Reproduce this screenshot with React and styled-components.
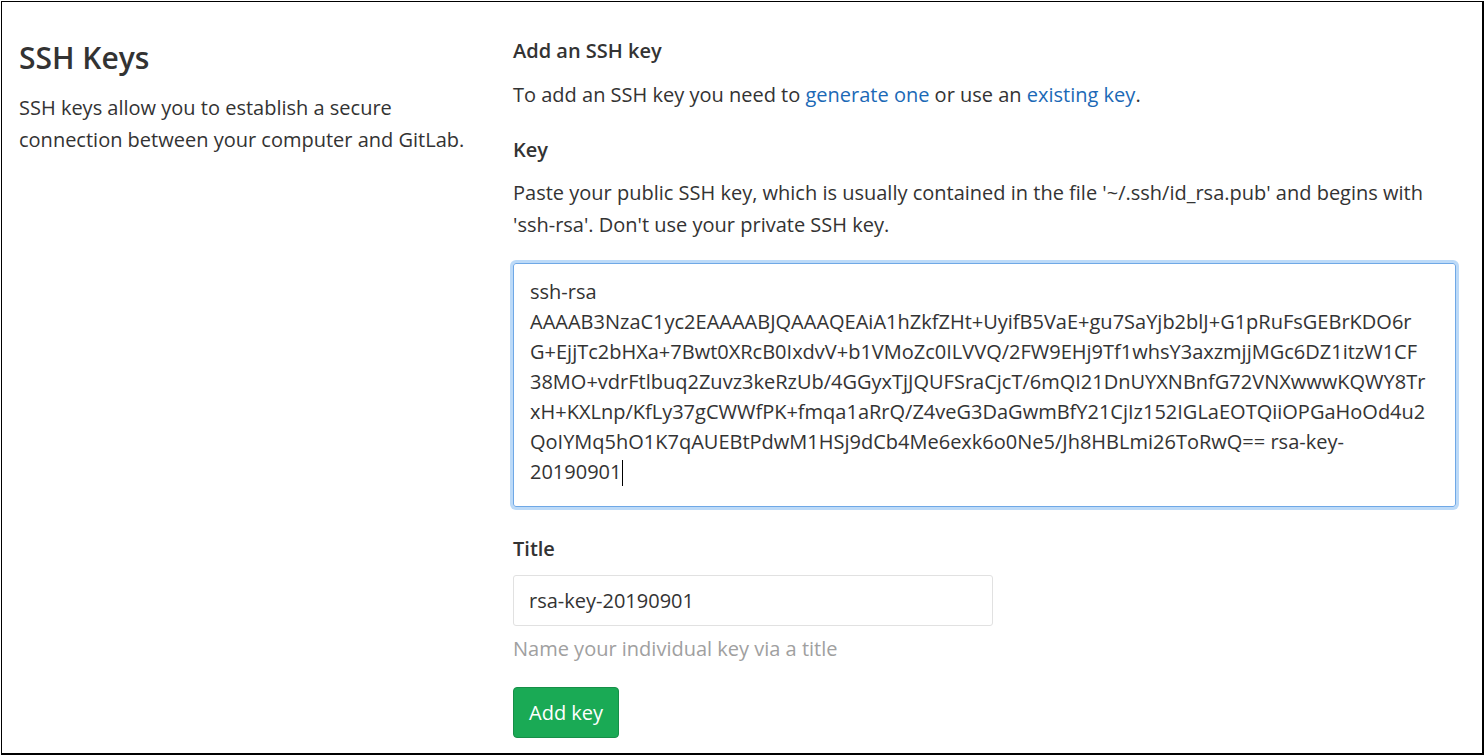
import React from 'react';
import styled, { createGlobalStyle } from 'styled-components';

const GlobalStyle = createGlobalStyle`
  html, body {
    margin: 0;
    padding: 0;
    background: #fff;
  }

  body {
    font-family: 'Open Sans', 'Noto Sans', sans-serif;
    color: #2e2e2e;
  }
`;

const Frame = styled.div`
  box-sizing: border-box;
  width: 1483px;
  height: 754px;
  margin: 1px 0 0 1px;
  border-style: solid;
  border-color: #000;
  border-width: 1px 2px 2px 1px;
  overflow: hidden;
  background: #fff;
`;

const Row = styled.div`
  display: grid;
  grid-template-columns: 472px 943px;
  gap: 22px;
  padding-left: 17px;
`;

const Aside = styled.div`
  padding-top: 37px;
`;

const PageTitle = styled.h4`
  margin: 0;
  font-size: 30px;
  line-height: 38px;
  font-weight: 600;
  color: #333;
`;

const Text = styled.p`
  margin: ${({ $top }) => $top || 0}px 0 0;
  font-size: 20px;
  line-height: 32px;
  color: ${({ $muted }) => ($muted ? '#a0a0a0' : '#333')};
`;

const Form = styled.div`
  padding-top: 33px;
`;

const Label = styled.div`
  margin-top: ${({ $top }) => $top || 0}px;
  font-size: 20px;
  line-height: 32px;
  font-weight: 600;
  color: #333;
`;

const Link = styled.a`
  color: #1b69b6;
  text-decoration: none;
`;

const KeyBox = styled.div`
  box-sizing: border-box;
  margin-top: 22px;
  width: 943px;
  height: 244px;
  padding: 13px 16px;
  border: 1px solid #6fa8e6;
  border-radius: 3px;
  box-shadow: 0 0 0 3px #bcdaf8;
  font-size: 20px;
  line-height: 30px;
  color: #333;
  white-space: pre;
`;

const Caret = styled.span`
  display: inline-block;
  width: 1px;
  height: 26px;
  margin-left: 1px;
  vertical-align: -7px;
  background: #000;
`;

const TitleInput = styled.input`
  box-sizing: border-box;
  display: block;
  margin-top: 10px;
  width: 480px;
  height: 51px;
  padding: 0 15px;
  border: 1px solid #e1e1e1;
  border-radius: 3px;
  font-family: inherit;
  font-size: 20px;
  color: #333;
  outline: none;
`;

const Button = styled.button`
  display: block;
  box-sizing: border-box;
  margin-top: 22px;
  height: 51px;
  padding: 0 15px;
  border: 1px solid #168f48;
  border-radius: 4px;
  background: #1aaa55;
  color: #fff;
  font-family: inherit;
  font-size: 20px;
`;

const keyLines = [
  'ssh-rsa',
  'AAAAB3NzaC1yc2EAAAABJQAAAQEAiA1hZkfZHt+UyifB5VaE+gu7SaYjb2blJ+G1pRuFsGEBrKDO6r',
  'G+EjjTc2bHXa+7Bwt0XRcB0IxdvV+b1VMoZc0ILVVQ/2FW9EHj9Tf1whsY3axzmjjMGc6DZ1itzW1CF',
  '38MO+vdrFtlbuq2Zuvz3keRzUb/4GGyxTjJQUFSraCjcT/6mQI21DnUYXNBnfG72VNXwwwKQWY8Tr',
  'xH+KXLnp/KfLy37gCWWfPK+fmqa1aRrQ/Z4veG3DaGwmBfY21CjIz152IGLaEOTQiiOPGaHoOd4u2',
  'QoIYMq5hO1K7qAUEBtPdwM1HSj9dCb4Me6exk6o0Ne5/Jh8HBLmi26ToRwQ== rsa-key-',
];

const App = () => (
  <>
    <GlobalStyle />
    <Frame>
      <Row>
        <Aside>
          <PageTitle>SSH Keys</PageTitle>
          <Text $top={15}>
            SSH keys allow you to establish a secure
            <br />
            connection between your computer and GitLab.
          </Text>
        </Aside>

        <Form>
          <Label>Add an SSH key</Label>
          <Text $top={12}>
            To add an SSH key you need to <Link href="#">generate one</Link> or use an{' '}
            <Link href="#">existing key</Link>.
          </Text>

          <Label $top={23}>Key</Label>
          <Text $top={11}>
            Paste your public SSH key, which is usually contained in the file '~/.ssh/id_rsa.pub' and begins with
            <br />
            'ssh-rsa'. Don't use your private SSH key.
          </Text>

          <KeyBox role="textbox">
            {keyLines.map((line) => (
              <div key={line}>{line}</div>
            ))}
            <div>
              20190901
              <Caret />
            </div>
          </KeyBox>

          <Label $top={26}>Title</Label>
          <TitleInput defaultValue="rsa-key-20190901" />
          <Text $top={7} $muted>
            Name your individual key via a title
          </Text>
          <Button>Add key</Button>
        </Form>
      </Row>
    </Frame>
  </>
);

export default App;
